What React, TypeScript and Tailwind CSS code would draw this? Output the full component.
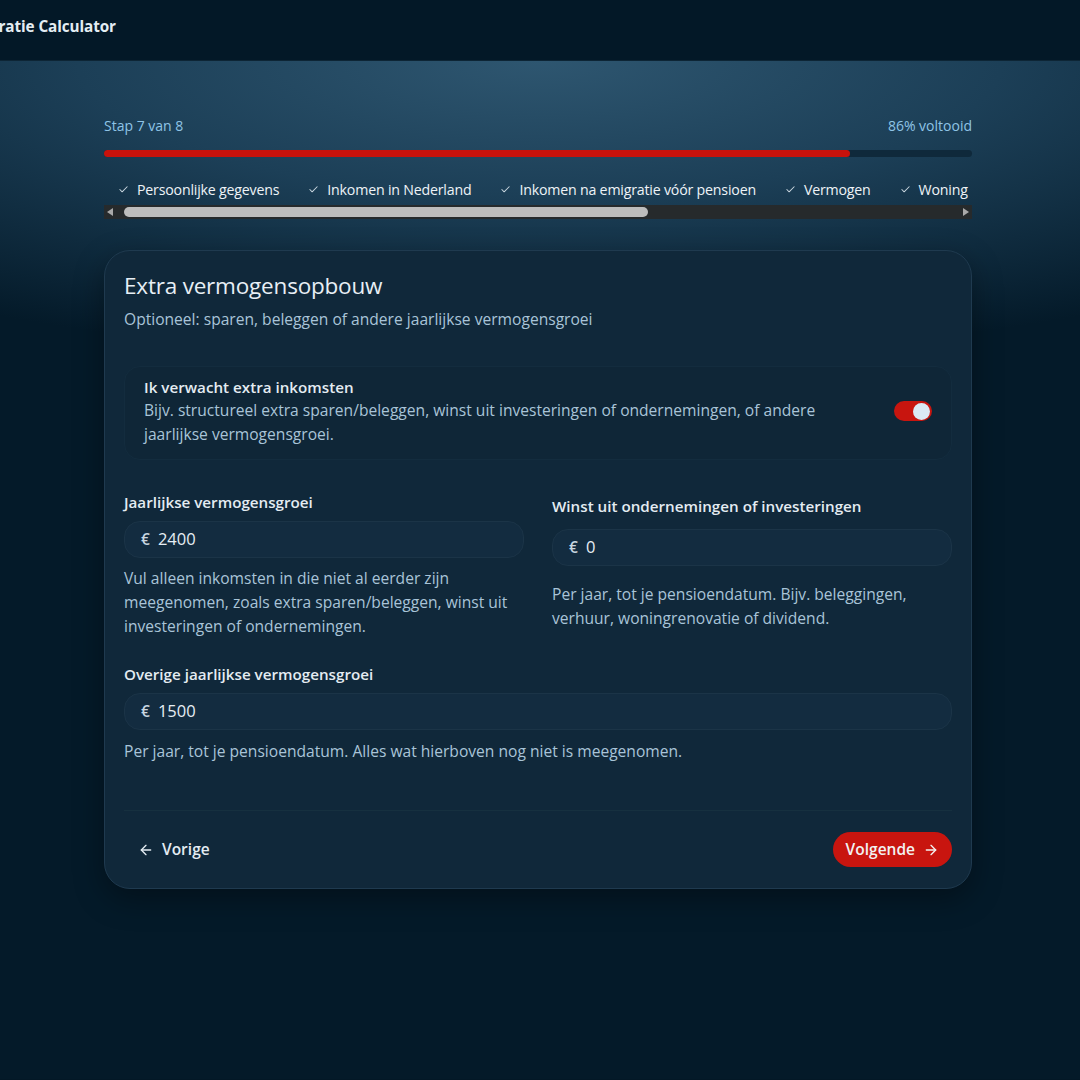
import { ArrowLeft, ArrowRight, Check } from "lucide-react";

const steps = [
  "Persoonlijke gegevens",
  "Inkomen in Nederland",
  "Inkomen na emigratie vóór pensioen",
  "Vermogen",
  "Woning",
];

function MoneyInput({ value, className = "" }: { value: string; className?: string }) {
  return (
    <div
      className={`flex h-[37px] items-center gap-2 rounded-2xl border border-[#1b3447] bg-[#132c40] px-4 text-[16.5px] text-[#e6eef4] ${className}`}
    >
      <span className="text-[15.5px] font-semibold text-[#c8d6e0]">€</span>
      <span>{value}</span>
    </div>
  );
}

function Toggle() {
  return (
    <div className="flex h-[20px] w-[38px] items-center justify-end rounded-full bg-[#c8150f] px-[2px]">
      <div className="h-[17px] w-[17px] rounded-full bg-[#dbe9f4]" />
    </div>
  );
}

export default function App() {
  return (
    <div
      className="min-h-[1080px] bg-[#031826] text-white"
      style={{ fontFamily: "'Open Sans', Lato, sans-serif" }}
    >
      <header className="flex h-[61px] items-center overflow-hidden border-b border-[#0d2535] bg-[#031827]">
        <span className="-ml-[38px] -mt-[8px] whitespace-nowrap text-[15.3px] font-bold tracking-[-0.1px] text-[#e4edf3]">
          Emigratie Calculator
        </span>
      </header>

      <main className="bg-[radial-gradient(ellipse_95%_300px_at_50%_0%,#2e5670_0%,#1c3f57_45%,#041a29_100%)] pb-[190px] pt-[54px]">
        <div className="mx-auto w-[868px] -translate-x-[2px]">
          <div className="flex items-center justify-between text-[14px] leading-[22px] text-[#8fc4e6]">
            <span>Stap 7 van 8</span>
            <span>86% voltooid</span>
          </div>
          <div className="mt-[13px] h-[7px] w-full rounded-full bg-[#0f293b]">
            <div className="h-full w-[86%] rounded-full bg-[#c8120c]" />
          </div>

          <div className="mt-[22px] flex items-center gap-[29px] whitespace-nowrap pl-[14px] text-[14.2px] tracking-[-0.2px] text-[#eef3f7]">
            {steps.map((s) => (
              <span key={s} className="flex items-center gap-[8px]">
                <Check size={11} strokeWidth={2.2} className="text-[#c9d6df]" />
                {s}
              </span>
            ))}
          </div>
          <div className="mt-[5px] flex h-[14px] items-center bg-[#262a2c] px-[3px]">
            <span className="h-0 w-0 border-y-[4px] border-r-[6px] border-y-transparent border-r-[#a9a9a9]" />
            <div className="ml-[11px] h-[10px] w-[524px] rounded-full bg-[#bdbdbd]" />
            <div className="flex-1" />
            <span className="h-0 w-0 border-y-[4px] border-l-[6px] border-y-transparent border-l-[#a9a9a9]" />
          </div>

          <section className="mt-[31px] rounded-[26px] border border-[#1f3a4f] bg-[#10283a] px-[19px] pb-[21px] pt-[21px] shadow-[0_10px_30px_rgba(0,0,0,0.35)]">
            <h1 className="text-[22.5px] leading-[28px] tracking-[-0.2px] text-[#e8eff5]">Extra vermogensopbouw</h1>
            <p className="mt-[7px] text-[15.6px] leading-[24px] text-[#a9c4d8]">
              Optioneel: sparen, beleggen of andere jaarlijkse vermogensgroei
            </p>

            <div className="mt-[35px] flex items-center justify-between rounded-2xl border border-[#132c3e] bg-[#0f2637] pb-[13px] pl-[19px] pr-[19px] pt-[9px]">
              <div className="w-[700px]">
                <div className="text-[15.2px] font-semibold leading-[22px] text-[#e4ecf2]">
                  Ik verwacht extra inkomsten
                </div>
                <div className="text-[15.6px] leading-[24px] text-[#a9c4d8]">
                  Bijv. structureel extra sparen/beleggen, winst uit investeringen of ondernemingen, of andere
                  jaarlijkse vermogensgroei.
                </div>
              </div>
              <Toggle />
            </div>

            <div className="mt-[31px] grid grid-cols-2 gap-[28px]">
              <div>
                <label className="block text-[15.2px] font-semibold leading-[22px] text-[#e4ecf2]">
                  Jaarlijkse vermogensgroei
                </label>
                <MoneyInput value="2400" className="mt-[8px]" />
                <p className="mt-[8px] text-[15.6px] leading-[24px] text-[#a9c4d8]">
                  Vul alleen inkomsten in die niet al eerder zijn meegenomen, zoals extra sparen/beleggen, winst uit
                  investeringen of ondernemingen.
                </p>
              </div>
              <div className="pt-[4px]">
                <label className="block text-[15.2px] font-semibold leading-[22px] text-[#e4ecf2]">
                  Winst uit ondernemingen of investeringen
                </label>
                <MoneyInput value="0" className="mt-[12px]" />
                <p className="mt-[16px] text-[15.6px] leading-[24px] text-[#a9c4d8]">
                  Per jaar, tot je pensioendatum. Bijv. beleggingen, verhuur, woningrenovatie of dividend.
                </p>
              </div>
            </div>

            <div className="mt-[25px]">
              <label className="block text-[15.2px] font-semibold leading-[22px] text-[#e4ecf2]">
                Overige jaarlijkse vermogensgroei
              </label>
              <MoneyInput value="1500" className="mt-[8px]" />
              <p className="mt-[9px] text-[15.6px] leading-[24px] text-[#a9c4d8]">
                Per jaar, tot je pensioendatum. Alles wat hierboven nog niet is meegenomen.
              </p>
            </div>

            <div className="mt-[47px] flex items-center justify-between border-t border-[#16303f] pt-[21px]">
              <button className="flex h-[35px] items-center gap-[8px] px-[14px] text-[15.5px] font-semibold text-[#e4ecf2]">
                <ArrowLeft size={16} strokeWidth={2} />
                Vorige
              </button>
              <button className="flex h-[35px] items-center gap-[8px] rounded-full bg-[#c8150f] px-[13px] text-[15.5px] font-semibold text-[#f2f2f2]">
                Volgende
                <ArrowRight size={16} strokeWidth={2} />
              </button>
            </div>
          </section>
        </div>
      </main>
    </div>
  );
}
